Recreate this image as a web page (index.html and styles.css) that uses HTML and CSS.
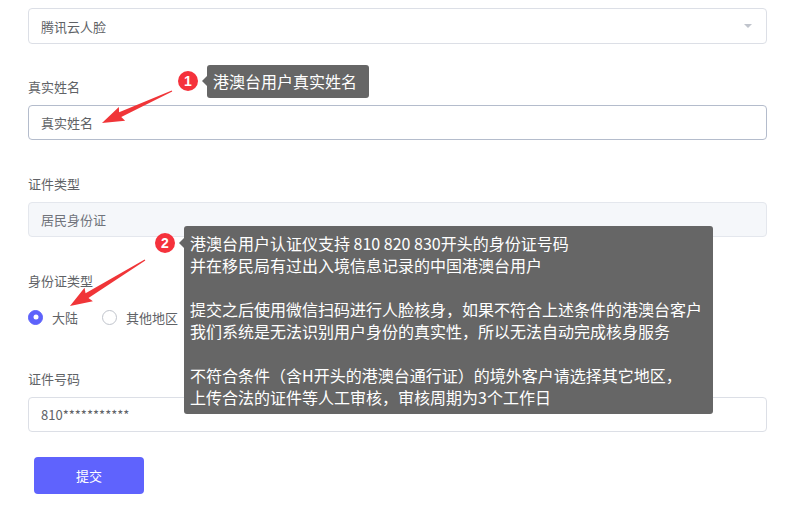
FILE: index.html
```html
<!DOCTYPE html>
<html lang="zh-CN">
  <head>
    <meta charset="UTF-8" />
    <title>实名认证</title>
    <link rel="stylesheet" href="styles.css">
  </head>
  <body>
    <div class="page">
      <form class="form">
        <div class="form-item first">
          <div class="select">
            <span>腾讯云人脸</span>
            <i class="caret"></i>
          </div>
        </div>

        <div class="form-item">
          <label class="label">真实姓名</label>
          <div class="input focus">真实姓名</div>
        </div>

        <div class="form-item">
          <label class="label">证件类型</label>
          <div class="input disabled">居民身份证</div>
        </div>

        <div class="form-item">
          <label class="label">身份证类型</label>
          <div class="radios">
            <span class="radio checked"><i></i>大陆</span>
            <span class="radio"><i></i>其他地区</span>
          </div>
        </div>

        <div class="form-item last">
          <label class="label">证件号码</label>
          <div class="input">810***********</div>
        </div>

        <button type="button" class="submit">提交</button>
      </form>

      <!-- 标注层 -->
      <svg class="arrows" width="802" height="509">
        <polygon transform="translate(172 91) rotate(155.4)"
          points="0,-0.6 57,-2.6 55,-7.5 77,0 55,7.5 57,2.6 0,0.6" />
        <polygon transform="translate(145 260) rotate(148.5)"
          points="0,-0.6 68,-2.8 66,-8 88,0 66,8 68,2.8 0,0.6" />
      </svg>

      <div class="tip tip-1">
        <span class="badge">1</span>
        <div class="bubble">港澳台用户真实姓名</div>
      </div>

      <div class="tip tip-2">
        <span class="badge">2</span>
        <div class="bubble">港澳台用户认证仪支持 810 820 830开头的身份证号码
并在移民局有过出入境信息记录的中国港澳台用户

提交之后使用微信扫码进行人脸核身，如果不符合上述条件的港澳台客户
我们系统是无法识别用户身份的真实性，所以无法自动完成核身服务

不符合条件（含H开头的港澳台通行证）的境外客户请选择其它地区，
上传合法的证件等人工审核，审核周期为3个工作日</div>
      </div>
    </div>
  </body>
</html>
```

FILE: styles.css
```css
body {
  margin: 0;
  background: #fff;
  font-family: "Microsoft YaHei", "Noto Sans CJK SC", "Noto Sans", sans-serif;
  color: #606266;
  font-size: 13px;
}

.page {
  position: relative;
  width: 802px;
  height: 509px;
  overflow: hidden;
}

.form {
  padding: 8px 35px 0 28px;
}

.form-item {
  margin-bottom: 34px;
}

.form-item.first {
  margin-bottom: 33px;
}

.form-item.last {
  margin-bottom: 25px;
}

.label {
  display: block;
  line-height: 20px;
  margin-bottom: 8px;
  color: #606266;
}

.select,
.input {
  box-sizing: border-box;
  height: 35px;
  border: 1px solid #dcdfe6;
  border-radius: 4px;
  padding: 0 12px;
  display: flex;
  align-items: center;
  color: #606266;
}

.select {
  height: 36px;
  justify-content: space-between;
}

.caret {
  width: 0;
  height: 0;
  border-left: 4px solid transparent;
  border-right: 4px solid transparent;
  border-top: 4px solid #c0c4cc;
  margin-right: 2px;
}

.input.focus {
  border-color: #b4bccc;
}

.input.disabled {
  background: #f5f7fa;
  border-color: #e4e7ed;
  color: #70737a;
}

.radios {
  height: 36px;
  display: flex;
  align-items: center;
  gap: 24px;
}

.radio {
  display: flex;
  align-items: center;
  gap: 9px;
}

.radio i {
  box-sizing: border-box;
  width: 15px;
  height: 15px;
  border-radius: 50%;
  border: 1px solid #c0c4cc;
  background: #fff;
  position: relative;
}

.radio.checked i {
  border-color: #5d62fb;
  background: #5d62fb;
}

.radio.checked i::after {
  content: "";
  position: absolute;
  left: 50%;
  top: 50%;
  width: 5px;
  height: 5px;
  border-radius: 50%;
  background: #fff;
  transform: translate(-50%, -50%);
}

.submit {
  margin: 0 0 0 6px;
  width: 110px;
  height: 37px;
  border: none;
  border-radius: 4px;
  background: #5f63fd;
  color: #fff;
  font-family: inherit;
  font-size: 13px;
  cursor: pointer;
}

.arrows {
  position: absolute;
  left: 0;
  top: 0;
  pointer-events: none;
}

.arrows polygon {
  fill: #f03538;
}

.tip {
  position: absolute;
  display: flex;
  align-items: flex-start;
}

.tip-1 {
  left: 178px;
  top: 65px;
}

.tip-2 {
  left: 155px;
  top: 226px;
}

.badge {
  width: 20px;
  height: 20px;
  border-radius: 50%;
  background: #f5323c;
  color: #fff;
  font-family: "Liberation Sans", Arial, sans-serif;
  font-weight: bold;
  font-size: 14px;
  line-height: 20px;
  text-align: center;
  margin-top: 6px;
  margin-right: 9px;
  flex: none;
}

.bubble {
  position: relative;
  background: #666;
  color: #fff;
  font-size: 16px;
  line-height: 22px;
  padding: 5px 12px 6px 6px;
  border-radius: 3px;
  white-space: pre;
}

.bubble::before {
  content: "";
  position: absolute;
  left: -5px;
  top: 11px;
  border-top: 5px solid transparent;
  border-bottom: 5px solid transparent;
  border-right: 5px solid #666;
}

.tip-2 .badge {
  margin-top: 7px;
  margin-right: 9px;
}

.tip-2 .bubble {
  padding: 6px 11px 6px 6px;
}

.tip-2 .bubble::before {
  top: 12px;
}
```
